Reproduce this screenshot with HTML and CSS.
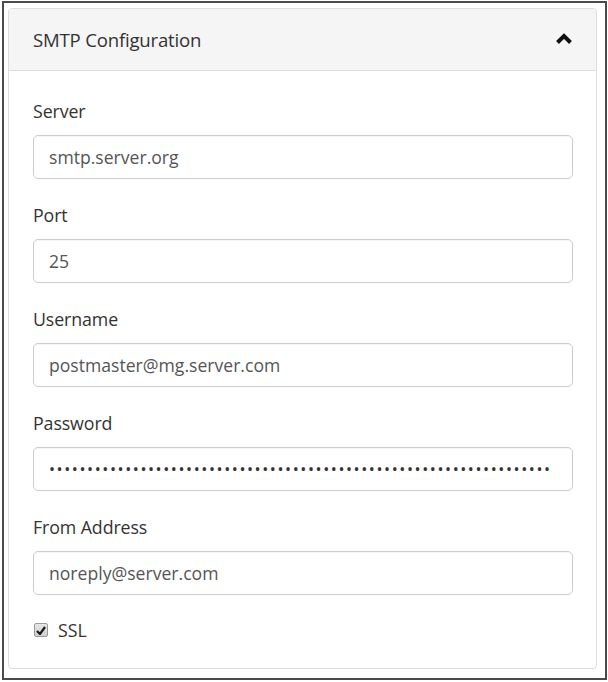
FILE: index.html
```html
<!DOCTYPE html>
<html>
<head>
<meta charset="utf-8">
<link rel="stylesheet" href="styles.css">
</head>
<body>
<div class="frame">
  <div class="card">
    <div class="card-header">
      <span class="card-title">SMTP Configuration</span>
      <svg class="chevron" width="18" height="12" viewBox="0 0 18 12">
        <polyline points="2.5,9.5 9,3 15.5,9.5" fill="none" stroke="#111" stroke-width="4" stroke-linecap="butt" stroke-linejoin="miter"/>
      </svg>
    </div>
    <div class="card-body">
      <div class="group">
        <label class="label">Server</label>
        <div class="input"><span class="value">smtp.server.org</span></div>
      </div>
      <div class="group">
        <label class="label">Port</label>
        <div class="input"><span class="value">25</span></div>
      </div>
      <div class="group">
        <label class="label">Username</label>
        <div class="input"><span class="value">postmaster@mg.server.com</span></div>
      </div>
      <div class="group">
        <label class="label">Password</label>
        <div class="input"><span class="value dots">••••••••••••••••••••••••••••••••••••••••••••••••••••••••••••••••••</span></div>
      </div>
      <div class="group">
        <label class="label">From Address</label>
        <div class="input"><span class="value">noreply@server.com</span></div>
      </div>
      <div class="check-row">
        <span class="checkbox">
          <svg width="10" height="9" viewBox="0 0 10 9"><path d="M1 5 L4 8 L9 1" fill="none" stroke="#1a1a1a" stroke-width="2.2"/></svg>
        </span>
        <span class="check-label">SSL</span>
      </div>
    </div>
  </div>
</div>
</body>
</html>
```

FILE: styles.css
```css
* { box-sizing: border-box; }
html, body { margin: 0; padding: 0; background: #fff; }
body { font-family: "Open Sans", "Noto Sans", sans-serif; color: #333; }

.frame {
  margin: 1px 0 0 2px;
  width: 605px;
  height: 679px;
  border: 2px solid #4a4a4a;
  padding: 5px 0 0 4px;
  background: #fff;
}

.card {
  width: 589px;
  height: 661px;
  border: 1px solid #ddd;
  border-radius: 4px;
  overflow: hidden;
}

.card-header {
  height: 62px;
  background: #f5f5f5;
  border-bottom: 1px solid #ddd;
  display: flex;
  align-items: center;
  justify-content: space-between;
  padding: 0 23px 0 24px;
}

.card-title { font-size: 18.6px; color: #333; letter-spacing: -0.2px; }

.chevron { display: block; margin-top: -2px; }

.card-body { padding: 28px 23px 0 24px; }

.group { margin-bottom: 24px; }

.label {
  display: block;
  font-size: 17.8px;
  line-height: 24px;
  margin-bottom: 12px;
  color: #333;
  letter-spacing: -0.1px;
}

.input {
  height: 44px;
  border: 1px solid #ccc;
  border-radius: 5px;
  padding: 0 15px;
  display: flex;
  align-items: center;
  font-size: 17.6px;
  color: #555;
  box-shadow: inset 0 1px 1px rgba(0,0,0,0.04);
}

.value {
  display: block;
  flex: 1;
  min-width: 0;
  white-space: nowrap;
  overflow: hidden;
}

.dots {
  font-size: 16px;
  letter-spacing: 1.6px;
  color: #333;
}

.check-row {
  display: flex;
  align-items: center;
  margin-top: -1px;
  height: 24px;
}

.checkbox {
  width: 14px;
  height: 14px;
  border: 1px solid #9a9a9a;
  border-radius: 2px;
  background: linear-gradient(#e6e6e6, #cfcfcf);
  display: flex;
  align-items: center;
  justify-content: center;
  margin-left: 1px;
}

.checkbox svg { display: block; }

.check-label { font-size: 17.8px; margin-left: 10px; color: #333; line-height: 24px; }
```
